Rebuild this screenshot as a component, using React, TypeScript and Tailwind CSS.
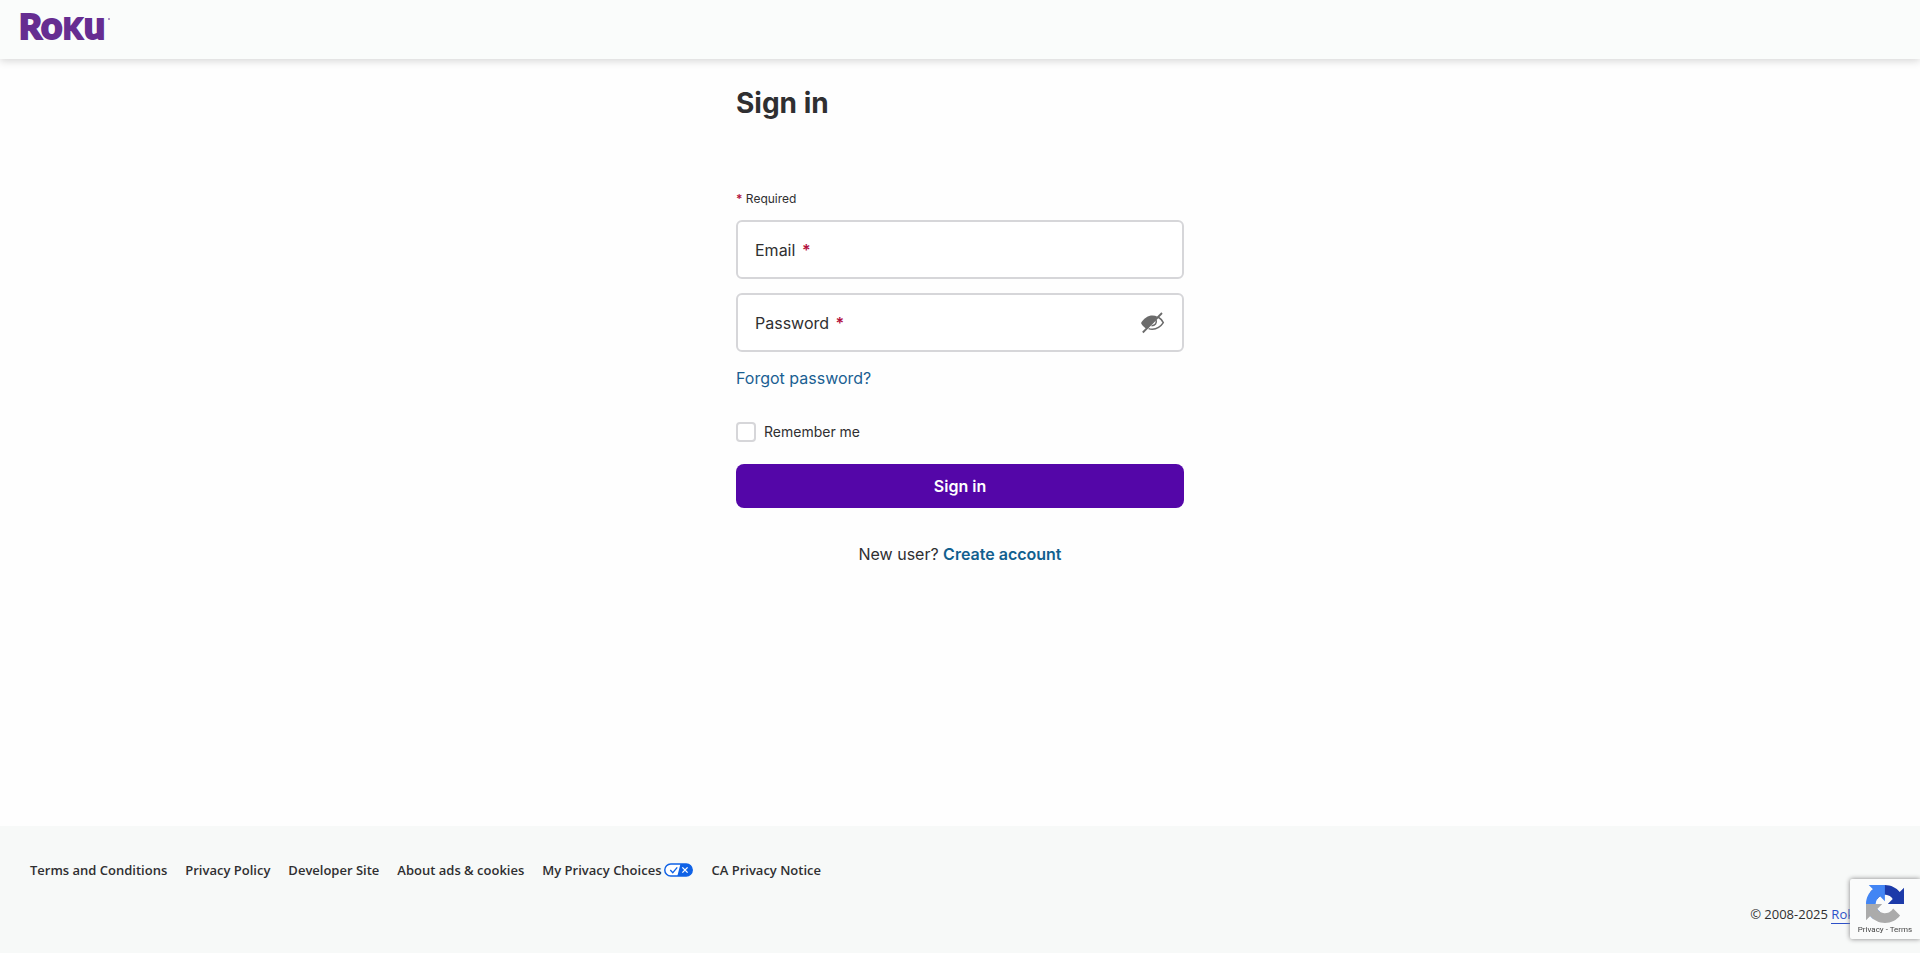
import { useState } from "react";

const footerLinks = [
  "Terms and Conditions",
  "Privacy Policy",
  "Developer Site",
  "About ads & cookies",
  "My Privacy Choices",
  "CA Privacy Notice"
];

const RokuLogo = () => (
  <svg className="h-10 w-24 overflow-visible" viewBox="0 0 96 40" role="img" aria-label="Roku">
    <g fill="#662d91" stroke="#662d91" fontFamily="Lato, sans-serif" fontWeight="900">
      <text y="31" strokeWidth="2">
        <tspan x="-1" fontSize="35">R</tspan>
        <tspan x="21" fontSize="37">o</tspan>
        <tspan x="43" fontSize="28">K</tspan>
        <tspan x="64" fontSize="37">u</tspan>
      </text>
    </g>
    <circle cx="89" cy="11" r="1" fill="#9a78b4" />
  </svg>
);

const HiddenEyeIcon = () => (
  <svg className="size-6" viewBox="0 0 24 24" fill="none" stroke="#6b6b6b" aria-hidden="true">
    <path
      d="M0 12C3 7 7 4.500 11.500 4.500c1.800 0 3.500.400 5 1.200L6 18C3.500 16.700 1.300 14.700 0 12Z"
      fill="#6b6b6b"
      stroke="none"
    />
    <path d="M17 6c2.200 1.200 4 3 5.300 5.700-2.800 4.300-6.800 6.500-11 6.500-1.300 0-2.600-.2-3.700-.6" strokeWidth="1.500" />
    <path d="M15 8.700c1.200 3.300-1 6-4.500 6" strokeWidth="1.500" />
    <path d="M13 10c.6 1.500-.4 2.700-2 2.800" stroke="#fff" strokeWidth="1" />
    <path d="M21 2 1.800 21.500" strokeWidth="1.800" />
  </svg>
);

const PrivacyChoicesIcon = () => (
  <svg className="h-[14px] w-[29px]" viewBox="0 0 30 14" aria-hidden="true">
    <rect x=".8" y=".8" width="28.400" height="12.400" rx="6.200" fill="#fff" stroke="#0f62e6" strokeWidth="1.500" />
    <path d="M17 .8h6a6.200 6.200 0 0 1 0 12.400h-9.200Z" fill="#0f62e6" />
    <path d="m6.500 7 2.600 2.800 4.600-5.500" fill="none" stroke="#0f62e6" strokeWidth="1.400" />
    <path d="m19 4.300 5.400 5.400m0-5.400L19 9.700" stroke="#fff" strokeWidth="1.400" />
  </svg>
);

const RecaptchaIcon = () => (
  <svg className="size-[38px]" viewBox="0 0 64 64" aria-hidden="true">
    <path
      fill="#1c3aa9"
      d="M64 31.955l-.033-1.370V4.687l-7.160 7.160C50.948 4.674 42.033.093 32.050.093c-10.400 0-19.622 4.960-25.458 12.640l11.736 11.860a15.550 15.550 0 0 1 4.754-5.334c2.050-1.600 4.952-2.906 8.968-2.906.485 0 .860.057 1.135.163 4.976.393 9.288 3.140 11.828 7.124l-8.307 8.307L64 31.953"
    />
    <path
      fill="#4285f4"
      d="M31.862.094l-1.370.033H4.594l7.160 7.160C4.580 13.147 0 22.060 0 32.046c0 10.400 4.960 19.622 12.640 25.458L24.500 45.768a15.550 15.550 0 0 1-5.334-4.754c-1.600-2.050-2.906-4.952-2.906-8.968 0-.485.057-.860.163-1.135.393-4.976 3.140-9.288 7.124-11.828l8.307 8.307L31.860.095"
    />
    <path
      fill="#ababab"
      d="M.001 32.045l.033 1.370v25.898l7.160-7.160c5.860 7.173 14.774 11.754 24.760 11.754 10.400 0 19.622-4.960 25.458-12.640l-11.736-11.860a15.550 15.550 0 0 1-4.754 5.334c-2.050 1.600-4.952 2.906-8.968 2.906-.485 0-.860-.057-1.135-.163-4.976-.393-9.288-3.140-11.828-7.124l8.307-8.307c-10.522.040-22.400.066-27.295-.005"
    />
  </svg>
);

type FieldProps = {
  id: string;
  label: string;
  type: string;
  children?: React.ReactNode;
};

const Field = ({ id, label, type, children }: FieldProps) => (
  <div className="flex h-[59px] items-center rounded-md border-2 border-[#d6d6d9] bg-white px-[17px]">
    <label htmlFor={id} className="text-base">
      {label} <span className="ml-[2px] font-semibold text-[#b3123f]">*</span>
    </label>
    <input id={id} type={type} required className="ml-2 h-full min-w-0 flex-1 bg-transparent outline-none" />
    {children}
  </div>
);

export default function App() {
  const [showPassword, setShowPassword] = useState(false);

  return (
    <div className="flex min-h-screen flex-col bg-[#fefefe] font-['Inter',sans-serif] text-[#2f2f31]">
      <header className="flex h-[59px] items-center bg-[#fafcfb] px-5 pb-1 shadow-[0_2px_8px_rgba(0,0,0,0.16)]">
        <a href="#">
          <RokuLogo />
        </a>
      </header>

      <main className="mx-auto w-full max-w-md flex-1 pt-6">
        <h1 className="text-[28px] leading-10 font-bold">Sign in</h1>
        <form className="mt-[68px]" onSubmit={(e) => e.preventDefault()}>
          <p className="mb-[13px] text-xs leading-4">
            <span className="font-semibold text-[#b3123f]">*</span> Required
          </p>
          <div className="flex flex-col gap-[14px]">
            <Field id="email" label="Email" type="email" />
            <Field id="password" label="Password" type={showPassword ? "text" : "password"}>
              <button type="button" aria-label="Show password" onClick={() => setShowPassword(!showPassword)}>
                <HiddenEyeIcon />
              </button>
            </Field>
          </div>
          <a href="#" className="mt-[14px] block w-fit text-base text-[#1a5f92]">
            Forgot password?
          </a>
          <div className="mt-8 flex items-center gap-2">
            <input
              id="remember"
              type="checkbox"
              className="size-5 appearance-none rounded-sm border-2 border-[#d6d6d9] bg-white checked:bg-[#5406a8]"
            />
            <label htmlFor="remember" className="text-sm">
              Remember me
            </label>
          </div>
          <button type="submit" className="mt-[22px] h-11 w-full rounded-lg bg-[#5406a8] text-base font-semibold text-white">
            Sign in
          </button>
        </form>
        <p className="mt-[34px] text-center text-base">
          New user?{" "}
          <a href="#" className="font-semibold text-[#12608f]">
            Create account
          </a>
        </p>
      </main>

      <footer className="bg-[#f7f9f8] px-[30px] pt-[35px] pb-[30px] font-['Open_Sans',sans-serif]">
        <ul className="flex flex-wrap gap-[18px] text-[13px] leading-[18px] font-semibold">
          {footerLinks.map((link) => (
            <li key={link}>
              <a href="#" className="flex items-center gap-[3px]">
                {link}
                {link === "My Privacy Choices" && <PrivacyChoicesIcon />}
              </a>
            </li>
          ))}
        </ul>
        <p className="mt-[26px] text-right text-[13px] leading-[18px]">
          © 2008-2025{" "}
          <a href="#" className="border-b border-[#2c50c8] text-[#2c50c8]">
            Roku, Inc.
          </a>
        </p>
      </footer>

      <div className="fixed right-0 bottom-[14px] flex h-[60px] w-[70px] flex-col items-center rounded-l-xs bg-[#fafbfb] pt-[6px] shadow-[0_0_5px_gray]">
        <RecaptchaIcon />
        <p className="font-['Roboto',sans-serif] text-[8px] leading-[14px] whitespace-nowrap text-[#444]">
          <a href="#">Privacy</a> - <a href="#">Terms</a>
        </p>
      </div>
    </div>
  );
}
